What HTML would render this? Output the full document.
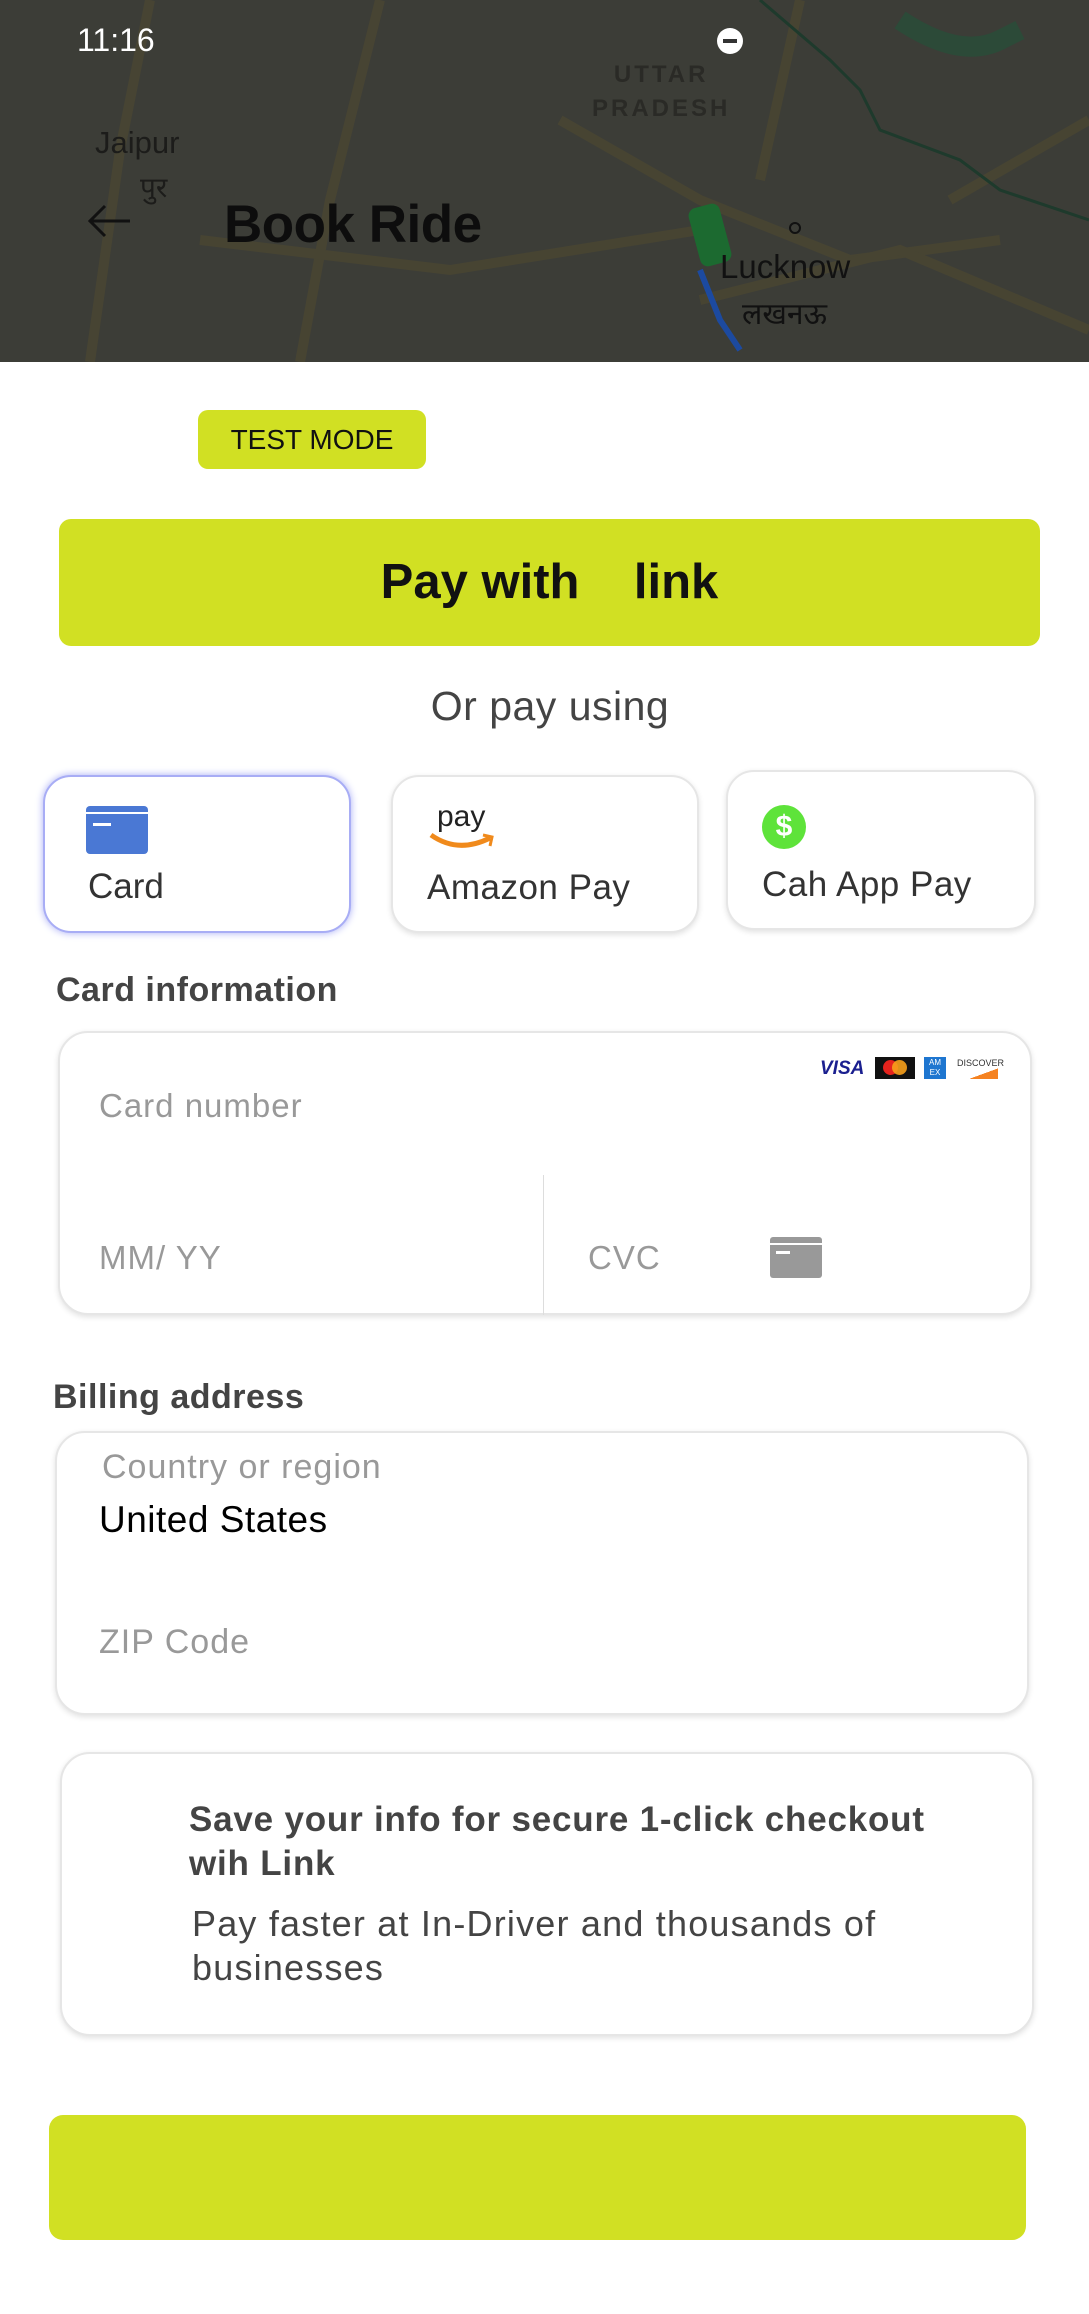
<!DOCTYPE html>
<html><head><meta charset="utf-8"><style>
*{margin:0;padding:0;box-sizing:border-box}
body{width:1089px;height:2314px;background:#fff;position:relative;overflow:hidden;font-family:"Liberation Sans","Noto Sans CJK SC",sans-serif}
.a{position:absolute;white-space:nowrap}
.box{position:absolute;background:#fff;border:2px solid #e6e6e6;box-shadow:0 2px 6px rgba(0,0,0,.12)}
.lime{background:#d1e023}
.g{color:#999;letter-spacing:1px}
</style></head><body>
<div class="a" style="left:0;top:0;width:1089px;height:362px;background:#3c3d37;overflow:hidden">
<svg width="1089" height="362" style="position:absolute;left:0;top:0">
<g fill="none" stroke="#4a4632" stroke-width="10" opacity=".8">
<path d="M150 0 L120 150 L90 362"/><path d="M380 0 L330 200 L300 362"/><path d="M560 120 L700 200 L850 260 L1000 240"/><path d="M200 240 L450 270 L700 230"/><path d="M700 300 L900 250 L1089 330"/><path d="M800 0 L760 180"/><path d="M1089 120 L950 200"/>
</g>
<path d="M760 0 L830 60 L860 90 L880 130 L960 160 L1000 190 L1089 220" fill="none" stroke="#1e3a2c" stroke-width="3"/>
<path d="M900 20 Q960 60 1000 40 L1020 30" fill="none" stroke="#2c4a38" stroke-width="20"/>
<path d="M700 270 L720 320 L740 350" stroke="#1c4aa0" stroke-width="6" fill="none"/>
<rect x="694" y="205" width="32" height="60" rx="8" fill="#1c6a30" transform="rotate(-15 710 235)"/>
<circle cx="795" cy="228" r="5" fill="none" stroke="#111" stroke-width="2"/>
<circle cx="730" cy="41" r="13" fill="#fff"/><rect x="723" y="39" width="14" height="4" fill="#333"/>
<path d="M130 221 L90 221 M105 206 L90 221 L105 236" stroke="#111" stroke-width="3" fill="none"/>
</svg>
<div class="a" style="left:77px;top:22px;font-size:32px;color:#fff">11:16</div>
<div class="a" style="left:592px;top:58px;font-size:24px;color:#2a2a26;font-weight:bold;letter-spacing:3px;line-height:34px;text-align:center">UTTAR<br>PRADESH</div>
<div class="a" style="left:95px;top:125px;font-size:31px;color:#1c1c1a">Jaipur</div>
<div class="a" style="left:140px;top:168px;font-size:28px;color:#1c1c1a">पुर</div>
<div class="a" style="left:224px;top:194px;font-size:53px;color:#0d0d0d;font-weight:bold;letter-spacing:-0.5px">Book Ride</div>
<div class="a" style="left:720px;top:248px;font-size:33px;color:#111">Lucknow</div>
<div class="a" style="left:742px;top:292px;font-size:30px;color:#111">लखनऊ</div>
</div>
<div class="a lime" style="left:198px;top:410px;width:228px;height:59px;border-radius:10px;font-size:28px;line-height:59px;text-align:center;color:#111">TEST MODE</div>
<div class="a lime" style="left:59px;top:519px;width:981px;height:127px;border-radius:12px;font-size:49px;font-weight:bold;line-height:127px;text-align:center;color:#111">Pay with &nbsp;&nbsp;&nbsp;link</div>
<div class="a" style="left:0;width:1100px;top:683px;font-size:41px;letter-spacing:.5px;text-align:center;color:#444">Or pay using</div>

<div class="box" style="left:43px;top:775px;width:308px;height:158px;border-radius:28px;border-color:#a8adf5;box-shadow:0 0 8px #a8adf5"></div>
<div class="a" style="left:86px;top:806px;width:62px;height:48px;background:#4a78d4;border-radius:4px"><div style="position:absolute;left:0;top:6px;width:62px;height:2px;background:#fff"></div><div style="position:absolute;left:7px;top:17px;width:18px;height:3px;background:#fff"></div></div>
<div class="a" style="left:88px;top:867px;font-size:35px;color:#333">Card</div>
<div class="box" style="left:391px;top:775px;width:308px;height:158px;border-radius:28px"></div>
<div class="a" style="left:437px;top:800px;font-size:30px;color:#222">pay</div>
<svg class="a" style="left:428px;top:832px" width="70" height="22"><path d="M3 3 Q30 22 62 6" stroke="#f08a1c" stroke-width="5" fill="none"/><path d="M55 3 L64 5 L62 14" stroke="#f08a1c" stroke-width="3" fill="none"/></svg>
<div class="a" style="left:427px;top:868px;font-size:35px;color:#333;letter-spacing:.5px">Amazon Pay</div>
<div class="box" style="left:726px;top:770px;width:310px;height:160px;border-radius:28px"></div>
<div class="a" style="left:762px;top:805px;width:44px;height:44px;border-radius:50%;background:#5ee33a;color:#fff;font-weight:bold;font-size:30px;line-height:44px;text-align:center">$</div>
<div class="a" style="left:762px;top:865px;font-size:35px;color:#333;letter-spacing:.5px">Cah App Pay</div>

<div class="a" style="left:56px;top:971px;font-size:34px;font-weight:bold;color:#444;letter-spacing:.5px">Card information</div>
<div class="box" style="left:58px;top:1031px;width:974px;height:284px;border-radius:30px"></div>
<div class="a" style="left:543px;top:1175px;width:1px;height:140px;background:#ddd"></div>
<div class="a" style="left:820px;top:1058px;font-size:19px;font-weight:bold;font-style:italic;color:#1a1f8f">VISA</div>
<div class="a" style="left:875px;top:1057px;width:40px;height:22px;background:#111"><div style="position:absolute;left:8px;top:3px;width:15px;height:15px;border-radius:50%;background:#e6231d"></div><div style="position:absolute;left:17px;top:3px;width:15px;height:15px;border-radius:50%;background:#f7a01b;opacity:.9"></div></div>
<div class="a" style="left:924px;top:1057px;width:22px;height:22px;background:#1e76d0;color:#fff;font-size:8px;line-height:10px;text-align:center;padding-top:1px">AM<br>EX</div>
<div class="a" style="left:957px;top:1058px;font-size:9px;color:#333">DISCOVER</div>
<div class="a" style="left:970px;top:1068px;width:28px;height:11px;background:linear-gradient(160deg,#fff 50%,#f58220 50%)"></div>
<div class="a g" style="left:99px;top:1087px;font-size:33px">Card number</div>
<div class="a g" style="left:99px;top:1239px;font-size:33px">MM/ YY</div>
<div class="a g" style="left:588px;top:1239px;font-size:33px">CVC</div>
<div class="a" style="left:770px;top:1237px;width:52px;height:41px;background:#999;border-radius:3px"><div style="position:absolute;left:0;top:6px;width:52px;height:2px;background:#fff"></div><div style="position:absolute;left:6px;top:14px;width:14px;height:3px;background:#fff"></div></div>

<div class="a" style="left:53px;top:1378px;font-size:34px;font-weight:bold;color:#444;letter-spacing:.5px">Billing address</div>
<div class="box" style="left:55px;top:1431px;width:974px;height:284px;border-radius:30px"></div>
<div class="a g" style="left:102px;top:1448px;font-size:34px">Country or region</div>
<div class="a" style="left:99px;top:1499px;font-size:37px;color:#000;letter-spacing:.5px">United States</div>
<div class="a g" style="left:99px;top:1623px;font-size:34px">ZIP Code</div>

<div class="box" style="left:60px;top:1752px;width:974px;height:284px;border-radius:30px"></div>
<div class="a" style="left:189px;top:1798px;font-size:35px;font-weight:bold;color:#444;line-height:44px;letter-spacing:.8px">Save your info for secure 1-click checkout<br>wih Link</div>
<div class="a" style="left:192px;top:1902px;font-size:36px;color:#444;line-height:44px;letter-spacing:1.2px">Pay faster at In-Driver and thousands of<br>businesses</div>

<div class="a lime" style="left:49px;top:2115px;width:977px;height:125px;border-radius:14px"></div>
</body></html>
